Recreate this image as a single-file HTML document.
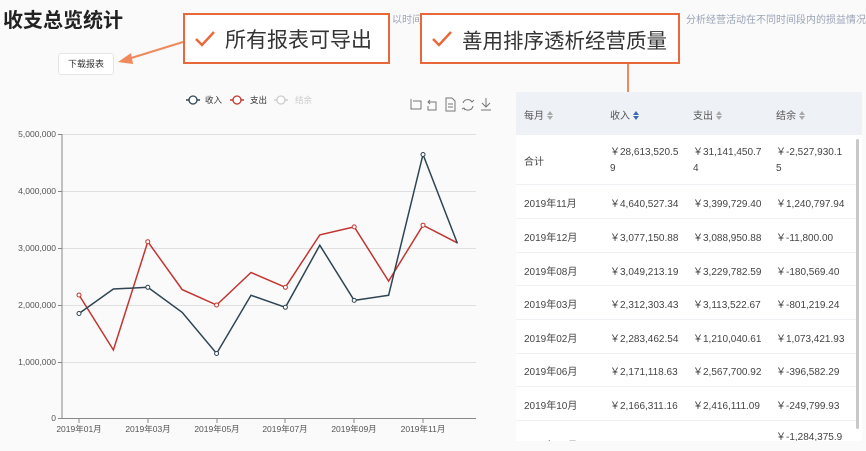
<!DOCTYPE html>
<html><head><meta charset="utf-8"><style>
*{margin:0;padding:0;box-sizing:border-box}
body{width:866px;height:451px;background:#fafafa;font-family:"Liberation Sans","Noto Sans CJK SC",sans-serif;position:relative;overflow:hidden;color:#333}
.a{position:absolute;white-space:nowrap}
.title{left:3px;top:4px;font-size:20px;font-weight:bold;color:#222}
.sub{font-size:10px;color:#9aa3b5;top:11px}
.box{position:absolute;border:2px solid #e8683a;background:#fff;font-size:21px;color:#333;display:flex;align-items:center;padding-left:10px;white-space:nowrap}
.box svg{margin-right:10px;flex:none}
.btn{left:58px;top:53px;width:56px;height:22px;border:1px solid #e4e4e4;background:#fff;border-radius:3px;font-size:9px;text-align:center;line-height:20px;color:#333}
.tbl{position:absolute;left:516px;top:92px;width:346px;height:349px;background:#fff;overflow:hidden}
.th{position:absolute;left:0;top:0;width:346px;height:43px;background:#eef1f6;font-size:10px;color:#555}
.c{position:absolute;font-size:10px;color:#444;white-space:nowrap}
.rl{position:absolute;left:0;width:340px;height:1px;background:#eef0f4}
.s{display:inline-block;position:relative;width:7px;height:9px;margin-left:3px;vertical-align:-1px}
.s:before{content:"";position:absolute;left:0;top:0;border-left:3.5px solid transparent;border-right:3.5px solid transparent;border-bottom:4px solid #aaa}
.s:after{content:"";position:absolute;left:0;top:5px;border-left:3.5px solid transparent;border-right:3.5px solid transparent;border-top:4px solid #aaa}
.s.b:before{border-bottom-color:#3a6ab0}.s.b:after{border-top-color:#3a6ab0}
</style></head><body>
<div class="a title">收支总览统计</div>
<div class="a sub" style="left:392px">以时间</div>
<div class="a sub" style="left:686px">分析经营活动在不同时间段内的损益情况</div>
<div class="a btn">下载报表</div>

<div class="box" style="left:183px;top:13px;width:207px;height:51px"><svg width="20" height="18" viewBox="0 0 20 18"><path d="M1 9 L7 15 L19 2" fill="none" stroke="#e8683a" stroke-width="2.4"/></svg>所有报表可导出</div>
<div class="box" style="left:420px;top:13px;width:260px;height:51px;font-size:20.5px"><svg width="20" height="18" viewBox="0 0 20 18"><path d="M1 9 L7 15 L19 2" fill="none" stroke="#e8683a" stroke-width="2.4"/></svg>善用排序透析经营质量</div>

<svg class="a" style="left:0;top:0" width="866" height="451">
<line x1="183" y1="42" x2="128" y2="59" stroke="#f08a5d" stroke-width="2"/>
<polygon points="118,62 131,53 133,64" fill="#f08a5d"/>
<line x1="628" y1="64" x2="628" y2="94" stroke="#f08a5d" stroke-width="2"/>
<polygon points="622,92 634,92 628,104" fill="#f08a5d"/>
</svg>

<svg class="a" style="left:0;top:0" width="510" height="451" font-family="Liberation Sans, Noto Sans CJK SC, sans-serif">
<g font-size="8.5">
<line x1="186" y1="100" x2="200" y2="100" stroke="#2f4554" stroke-width="1.5"/><circle cx="193" cy="100" r="4" fill="#fff" stroke="#2f4554" stroke-width="1.3"/><text x="205" y="103" fill="#333">收入</text>
<line x1="230" y1="100" x2="244" y2="100" stroke="#c23531" stroke-width="1.5"/><circle cx="237" cy="100" r="4" fill="#fff" stroke="#c23531" stroke-width="1.3"/><text x="250" y="103" fill="#333">支出</text>
<line x1="274" y1="100" x2="288" y2="100" stroke="#ccc" stroke-width="1.5"/><circle cx="281" cy="100" r="4" fill="#fff" stroke="#ccc" stroke-width="1.3"/><text x="295" y="103" fill="#ccc">结余</text>
</g>
<g fill="none" stroke="#777" stroke-width="1">
<path d="M411 99v10h10M413 101h8v8"/>
<path d="M430 100l-2 2 2 2M428 102h8v8h-8v-4"/>
<path d="M446 98h6l3 3v10h-9z M448 104h5M448 107h5"/>
<path d="M463 103a5 5 0 0 1 9-1M473 106a5 5 0 0 1-9 2M470 100l2 2 2-2M465 110l-1-2-2 1"/>
<path d="M486 98v9M482 103l4 4 4-4M481 110h10"/>
</g>
<g stroke="#e0e0e0" stroke-width="1">
<line x1="62" y1="134.5" x2="476" y2="134.5"/><line x1="62" y1="191.5" x2="476" y2="191.5"/><line x1="62" y1="248.5" x2="476" y2="248.5"/><line x1="62" y1="305.5" x2="476" y2="305.5"/><line x1="62" y1="362.5" x2="476" y2="362.5"/>
</g>
<line x1="62" y1="134" x2="62" y2="419" stroke="#888"/>
<line x1="62" y1="418.5" x2="476" y2="418.5" stroke="#888"/>
<g stroke="#888"><line x1="58" y1="134.5" x2="62" y2="134.5"/><line x1="58" y1="191.5" x2="62" y2="191.5"/><line x1="58" y1="248.5" x2="62" y2="248.5"/><line x1="58" y1="305.5" x2="62" y2="305.5"/><line x1="58" y1="362.5" x2="62" y2="362.5"/><line x1="58" y1="418.5" x2="62" y2="418.5"/>
<line x1="79" y1="419" x2="79" y2="423"/><line x1="148" y1="419" x2="148" y2="423"/><line x1="217" y1="419" x2="217" y2="423"/><line x1="285" y1="419" x2="285" y2="423"/><line x1="354" y1="419" x2="354" y2="423"/><line x1="423" y1="419" x2="423" y2="423"/></g>
<g font-size="8.5" fill="#555" text-anchor="end">
<text x="56" y="137">5,000,000</text><text x="56" y="194">4,000,000</text><text x="56" y="251">3,000,000</text><text x="56" y="308">2,000,000</text><text x="56" y="365">1,000,000</text><text x="56" y="421">0</text>
</g>
<g font-size="8.5" fill="#555" text-anchor="middle">
<text x="79" y="432">2019年01月</text><text x="148" y="432">2019年03月</text><text x="217" y="432">2019年05月</text><text x="285" y="432">2019年07月</text><text x="354" y="432">2019年09月</text><text x="423" y="432">2019年11月</text>
</g>
<polyline fill="none" stroke="#c23531" stroke-width="1.5" points="79,295 113.4,350 147.8,241.7 182.2,289.6 216.6,305 251,272.5 285.4,287.3 319.8,234.9 354.2,226.9 388.6,281.1 423,225.2 457.4,242.9"/>
<polyline fill="none" stroke="#2f4554" stroke-width="1.5" points="79,313.5 113.4,289 147.8,287.3 182.2,312.4 216.6,353.5 251,295.3 285.4,307.3 319.8,245.2 354.2,300.4 388.6,295.3 423,154.5 457.4,243.4"/>
<g fill="#fff" stroke="#c23531" stroke-width="1"><circle cx="79" cy="295" r="2"/><circle cx="147.8" cy="241.7" r="2"/><circle cx="216.6" cy="305" r="2"/><circle cx="285.4" cy="287.3" r="2"/><circle cx="354.2" cy="226.9" r="2"/><circle cx="423" cy="225.2" r="2"/></g>
<g fill="#fff" stroke="#2f4554" stroke-width="1"><circle cx="79" cy="313.5" r="2"/><circle cx="147.8" cy="287.3" r="2"/><circle cx="216.6" cy="353.5" r="2"/><circle cx="285.4" cy="307.3" r="2"/><circle cx="354.2" cy="300.4" r="2"/><circle cx="423" cy="154.5" r="2"/></g>
</svg>

<div class="tbl">
<div class="th">
<div class="c" style="left:8px;top:15px;color:#555">每月<span class="s"></span></div>
<div class="c" style="left:94px;top:15px;color:#555">收入<span class="s b"></span></div>
<div class="c" style="left:177px;top:15px;color:#555">支出<span class="s"></span></div>
<div class="c" style="left:260px;top:15px;color:#555">结余<span class="s"></span></div>
</div>
<div class="c" style="left:8px;top:61px">合计</div>
<div class="c" style="left:94px;top:53px;line-height:16px">￥28,613,520.5<br>9</div>
<div class="c" style="left:177px;top:53px;line-height:16px">￥31,141,450.7<br>4</div>
<div class="c" style="left:260px;top:53px;line-height:16px">￥-2,527,930.1<br>5</div>
<div class="rl" style="top:92px"></div>
<div class="c" style="left:8px;top:103px">2019年11月</div><div class="c" style="left:94px;top:103px">￥4,640,527.34</div><div class="c" style="left:177px;top:103px">￥3,399,729.40</div><div class="c" style="left:260px;top:103px">￥1,240,797.94</div>
<div class="rl" style="top:126px"></div>
<div class="c" style="left:8px;top:137px">2019年12月</div><div class="c" style="left:94px;top:137px">￥3,077,150.88</div><div class="c" style="left:177px;top:137px">￥3,088,950.88</div><div class="c" style="left:260px;top:137px">￥-11,800.00</div>
<div class="rl" style="top:160px"></div>
<div class="c" style="left:8px;top:171px">2019年08月</div><div class="c" style="left:94px;top:171px">￥3,049,213.19</div><div class="c" style="left:177px;top:171px">￥3,229,782.59</div><div class="c" style="left:260px;top:171px">￥-180,569.40</div>
<div class="rl" style="top:193px"></div>
<div class="c" style="left:8px;top:204px">2019年03月</div><div class="c" style="left:94px;top:204px">￥2,312,303.43</div><div class="c" style="left:177px;top:204px">￥3,113,522.67</div><div class="c" style="left:260px;top:204px">￥-801,219.24</div>
<div class="rl" style="top:227px"></div>
<div class="c" style="left:8px;top:238px">2019年02月</div><div class="c" style="left:94px;top:238px">￥2,283,462.54</div><div class="c" style="left:177px;top:238px">￥1,210,040.61</div><div class="c" style="left:260px;top:238px">￥1,073,421.93</div>
<div class="rl" style="top:261px"></div>
<div class="c" style="left:8px;top:271px">2019年06月</div><div class="c" style="left:94px;top:271px">￥2,171,118.63</div><div class="c" style="left:177px;top:271px">￥2,567,700.92</div><div class="c" style="left:260px;top:271px">￥-396,582.29</div>
<div class="rl" style="top:294px"></div>
<div class="c" style="left:8px;top:305px">2019年10月</div><div class="c" style="left:94px;top:305px">￥2,166,311.16</div><div class="c" style="left:177px;top:305px">￥2,416,111.09</div><div class="c" style="left:260px;top:305px">￥-249,799.93</div>
<div class="rl" style="top:328px"></div>
<div class="c" style="left:260px;top:336px">￥-1,284,375.9</div>
<div class="c" style="left:8px;top:345px">2019年09月</div>
<div class="c" style="left:94px;top:345px">￥2,083,718.12</div>
<div class="c" style="left:177px;top:345px">￥3,367,185.18</div>
<div style="position:absolute;left:340px;top:47px;width:3px;height:290px;background:#c8c8c8;border-radius:2px"></div>
</div>
</body></html>
